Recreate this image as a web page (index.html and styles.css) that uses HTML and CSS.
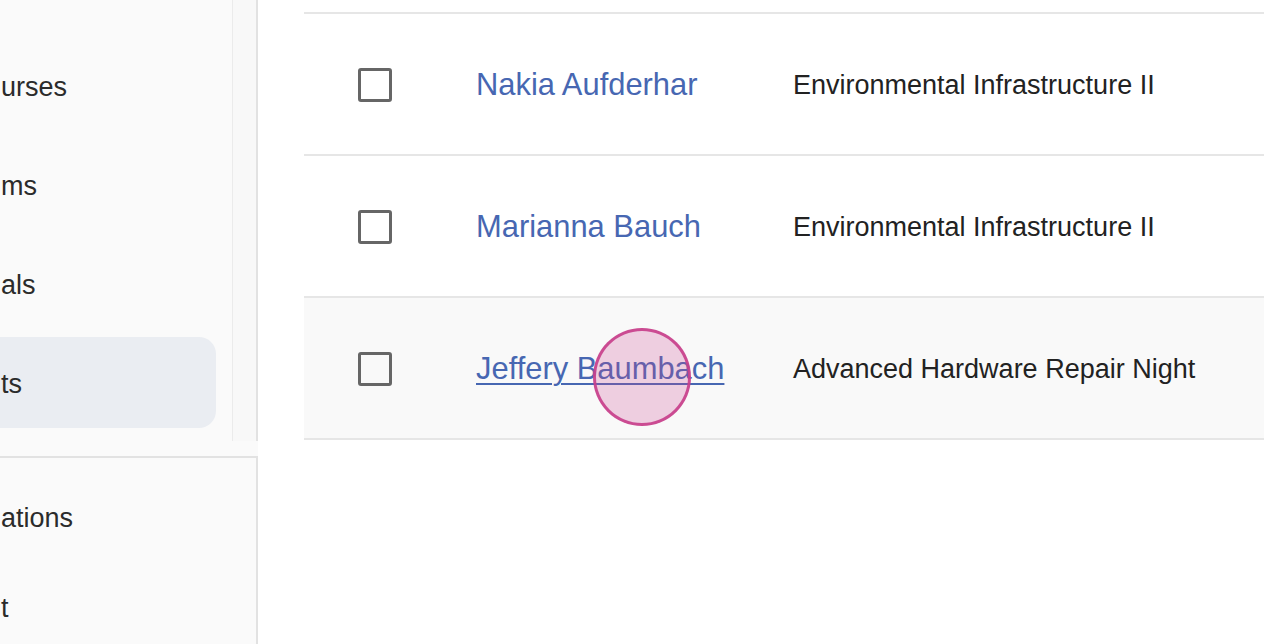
FILE: index.html
```html
<!DOCTYPE html>
<html lang="en">
<head>
<meta charset="utf-8">
<title>Students</title>
<link rel="stylesheet" href="styles.css">
</head>
<body>
<div class="app">
  <aside class="sidebar">
    <div class="sidebar-top">
      <nav class="nav">
        <a class="nav-item">urses</a>
        <a class="nav-item">ms</a>
        <a class="nav-item">als</a>
        <a class="nav-item active">ts</a>
      </nav>
      <div class="scroll-track"></div>
    </div>
    <div class="sidebar-bottom">
      <a class="nav-item small">ations</a>
      <a class="nav-item small">t</a>
    </div>
  </aside>
  <main class="main">
    <div class="table">
      <div class="row">
        <div class="cell check"><span class="checkbox"></span></div>
        <div class="cell name"><a class="link">Nakia Aufderhar</a></div>
        <div class="cell desc">Environmental Infrastructure II</div>
      </div>
      <div class="row">
        <div class="cell check"><span class="checkbox"></span></div>
        <div class="cell name"><a class="link">Marianna Bauch</a></div>
        <div class="cell desc">Environmental Infrastructure II</div>
      </div>
      <div class="row hover">
        <div class="cell check"><span class="checkbox"></span></div>
        <div class="cell name"><a class="link">Jeffery Baumbach</a></div>
        <div class="cell desc">Advanced Hardware Repair Night</div>
      </div>
    </div>
    <div class="cursor"></div>
  </main>
</div>
</body>
</html>
```

FILE: styles.css
```css
* { box-sizing: border-box; }
html, body { margin: 0; padding: 0; height: 100%; }
body {
  font-family: "Liberation Sans", Arial, sans-serif;
  background: #ffffff;
  color: #222;
  overflow: hidden;
}
.app {
  display: flex;
  height: 644px;
}
.sidebar {
  width: 258px;
  flex: none;
  background: #fafafa;
  display: flex;
  flex-direction: column;
}
.sidebar-top {
  flex: none;
  height: 441px;
  display: flex;
}
.nav {
  width: 232px;
  padding-top: 40px;
  display: flex;
  flex-direction: column;
  gap: 8px;
}
.nav-item {
  display: block;
  height: 91px;
  padding-top: 4px;
  line-height: 87px;
  font-size: 27px;
  color: #2b2b2b;
  padding-left: 1px;
  margin-right: 16px;
  border-radius: 0 17px 17px 0;
}
.nav-item.active {
  background: #eaedf2;
}
.scroll-track {
  width: 26px;
  background: #f8f8f8;
  border-left: 1px solid #ebebeb;
  border-right: 2px solid #e2e2e2;
}
.sidebar-bottom {
  margin-top: 15px;
  flex: 1;
  min-height: 0;
  overflow: hidden;
  border-top: 2px solid #e2e2e2;
  border-right: 2px solid #e2e2e2;
  padding-top: 16px;
}
.nav-item.small {
  height: 90px;
  padding-top: 0;
  line-height: 88px;
  margin-right: 0;
}
.main {
  flex: 1;
  position: relative;
  padding-top: 12px;
  padding-left: 46px;
}
.table {
  border-top: 2px solid #e6e6e6;
}
.row {
  display: grid;
  grid-template-columns: 172px 317px 1fr;
  align-items: center;
  height: 142px;
  padding-top: 2px;
  border-bottom: 2px solid #e6e6e6;
}
.row.hover {
  background: #f9f9f9;
}
.cell.check {
  padding-left: 54px;
  display: flex;
  align-items: center;
}
.checkbox {
  display: block;
  width: 34px;
  height: 34px;
  border: 3px solid #666;
  border-radius: 3px;
  background: #fff;
}
.row.hover .checkbox { background: transparent; }
.link {
  font-size: 30.9px;
  color: #4767b2;
  text-decoration: none;
  white-space: nowrap;
}
.row.hover .link {
  text-decoration: underline;
  text-decoration-thickness: 2px;
  text-underline-offset: 4px;
}
.cell.desc {
  font-size: 27px;
  color: #222;
  white-space: nowrap;
}
.cursor {
  position: absolute;
  left: 335px;
  top: 328px;
  width: 98px;
  height: 98px;
  border-radius: 50%;
  border: 3px solid rgba(200, 64, 140, 0.92);
  background: rgba(204, 70, 145, 0.24);
}
```
